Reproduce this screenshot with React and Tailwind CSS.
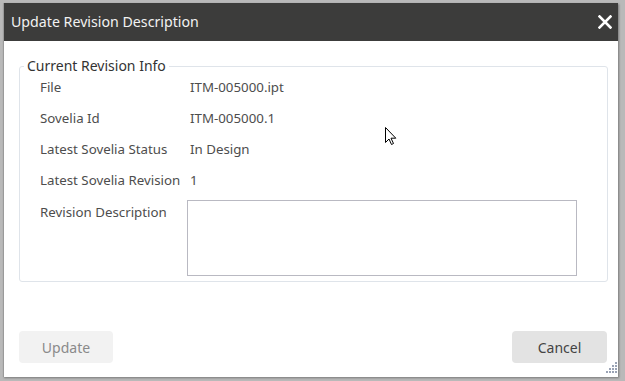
import React from "react";

const font = { fontFamily: '"Noto Sans", "Open Sans", sans-serif' };

function Row({ label, value }) {
  return (
    <div className="flex h-[24px] items-center text-[13.3px] text-[#4d4d4d]">
      <div className="w-[147px]">{label}</div>
      <div className="pl-[3px]">{value}</div>
    </div>
  );
}

export default function App() {
  return (
    <div
      className="relative w-[625px] h-[381px] overflow-hidden bg-[#b9b9b9]"
      style={font}
    >
      <div className="relative ml-[3px] mt-[3px] w-[615px] h-[374px] bg-white border-l border-[#9a9a9a] flex flex-col shadow-[1px_1px_2px_rgba(0,0,0,0.35)]">
        <div className="h-[38px] shrink-0 bg-[#3c3c3b] flex items-center justify-between pl-[7px] pr-[6px]">
          <span className="text-[14.2px] text-[#f2f2f2]">Update Revision Description</span>
          <svg width="14" height="14" viewBox="0 0 14 14">
            <path d="M1.5 1.5 L12.5 12.5 M12.5 1.5 L1.5 12.5" stroke="#ffffff" strokeWidth="2.6" strokeLinecap="square" />
          </svg>
        </div>
        <fieldset className="ml-[15px] mt-[15px] w-[589px] border border-[#dfe4ea] rounded-[3px] pb-[5px]">
          <legend className="ml-[4px] px-[3px] text-[14px] leading-[20px] text-[#333333]">
            Current Revision Info
          </legend>
          <div className="flex flex-col gap-[7px] pl-[20px]">
            <Row label="File" value="ITM-005000.ipt" />
            <Row label="Sovelia Id" value="ITM-005000.1" />
            <Row label="Latest Sovelia Status" value="In Design" />
            <Row label="Latest Sovelia Revision" value="1" />
            <div className="flex text-[13.3px] text-[#4d4d4d]">
              <div className="w-[147px] leading-[24px]">Revision Description</div>
              <div className="w-[390px] h-[76px] border border-[#b9b9c2] bg-white" />
            </div>
          </div>
        </fieldset>
        <div className="flex-1" />
        <div className="flex justify-between pl-[15px] pr-[11px] pb-[14px]">
          <button className="w-[94px] h-[32px] rounded-[4px] bg-[#f2f2f2] text-[14px] text-[#8a8a8a]">
            Update
          </button>
          <button className="w-[95px] h-[32px] rounded-[4px] bg-[#e3e3e3] text-[14px] text-[#444444]">
            Cancel
          </button>
        </div>
        <svg className="absolute right-[1px] bottom-[3px]" width="11" height="13" viewBox="0 0 11 13">
          {[[9, 1], [9, 4], [6, 4], [9, 7], [6, 7], [3, 7], [9, 10], [6, 10], [3, 10], [0, 10]].map(([x, y], i) => (
            <rect key={i} x={x} y={y} width="2" height="2" fill="#9aa3b5" />
          ))}
        </svg>
      </div>
      <svg className="absolute left-[385px] top-[127px]" width="13" height="20" viewBox="0 0 13 20">
        <path d="M0.5 0.5 L0.5 15.5 L4 12 L6.5 17.5 L8.5 16.5 L6 11.2 L10.8 11.2 Z" fill="#ffffff" stroke="#000000" strokeWidth="1" />
      </svg>
    </div>
  );
}
